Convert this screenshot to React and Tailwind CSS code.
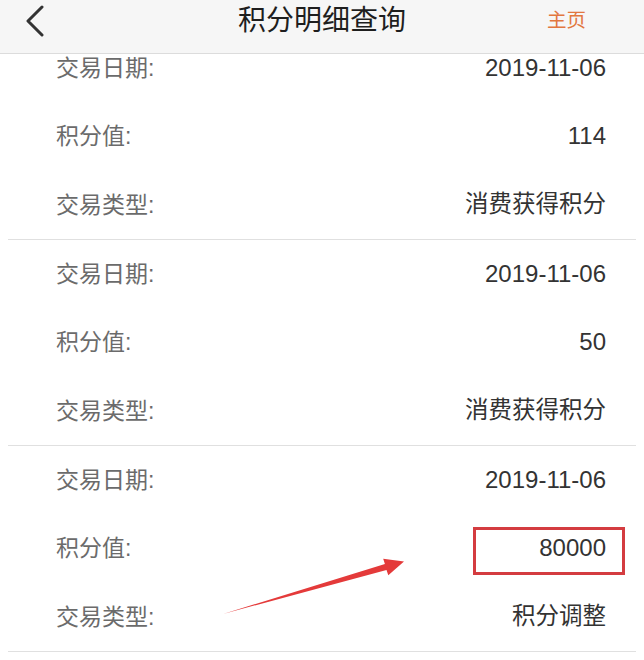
import React from 'react';

const records = [
  { date: '2019-11-06', points: '114', type: '消费获得积分' },
  { date: '2019-11-06', points: '50', type: '消费获得积分' },
  { date: '2019-11-06', points: '80000', type: '积分调整', marked: true },
];

const Row = ({ label, value, marked, digits }) => (
  <div className="relative flex items-center justify-between h-[68.33px] pl-[56px] pr-[38px]">
    <span className="text-[23px] text-[#6b6b6b]">{label}</span>
    <span className={digits ? 'text-[24px] text-[#333333]' : 'text-[23.5px] text-[#333333]'}>{value}</span>
    {marked && (
      <div className="absolute right-[19px] top-[13px] w-[152px] h-[48px] border-[3px] border-[#d43c40]" />
    )}
  </div>
);

export default function App() {
  return (
    <div
      className="relative w-[644px] h-[660px] overflow-hidden bg-white"
      style={{ fontFamily: '"Liberation Sans", "Noto Sans CJK SC", sans-serif' }}
    >
      {/* Header */}
      <div className="relative z-10 h-[54px] bg-[#f6f6f6] border-b border-[#dcdcdc]">
        <div className="relative flex items-center justify-between h-[42px] pl-[24px] pr-[58px]">
          <svg width="22" height="32" viewBox="0 0 22 32" className="mt-[-1px]">
            <polyline points="18,2 4,16 18,30" fill="none" stroke="#333" strokeWidth="3" strokeLinecap="round" strokeLinejoin="round" />
          </svg>
          <span className="absolute left-0 right-0 text-center text-[28px] text-[#1e1e1e] pointer-events-none">积分明细查询</span>
          <span className="text-[19.5px] text-[#e2773f]">主页</span>
        </div>
      </div>

      {/* List */}
      <div className="h-[606px] overflow-hidden">
        <div className="-mt-[20px]">
          {records.map((r, i) => (
            <div key={i}>
              <Row label="交易日期:" value={r.date} digits />
              <Row label="积分值:" value={r.points} marked={r.marked} digits />
              <Row label="交易类型:" value={r.type} />
              <div className="mx-[8px] h-px bg-[#e0e0e0]" />
            </div>
          ))}
        </div>
      </div>

      {/* Annotation arrow */}
      <svg className="absolute left-0 top-0 pointer-events-none" width="644" height="660" viewBox="0 0 644 660">
        <polygon
          points="223,614 384.9,564.1 383.2,558.8 404,561.5 388.3,575.2 386.5,569.9"
          fill="#e43a3a"
        />
      </svg>
    </div>
  );
}
